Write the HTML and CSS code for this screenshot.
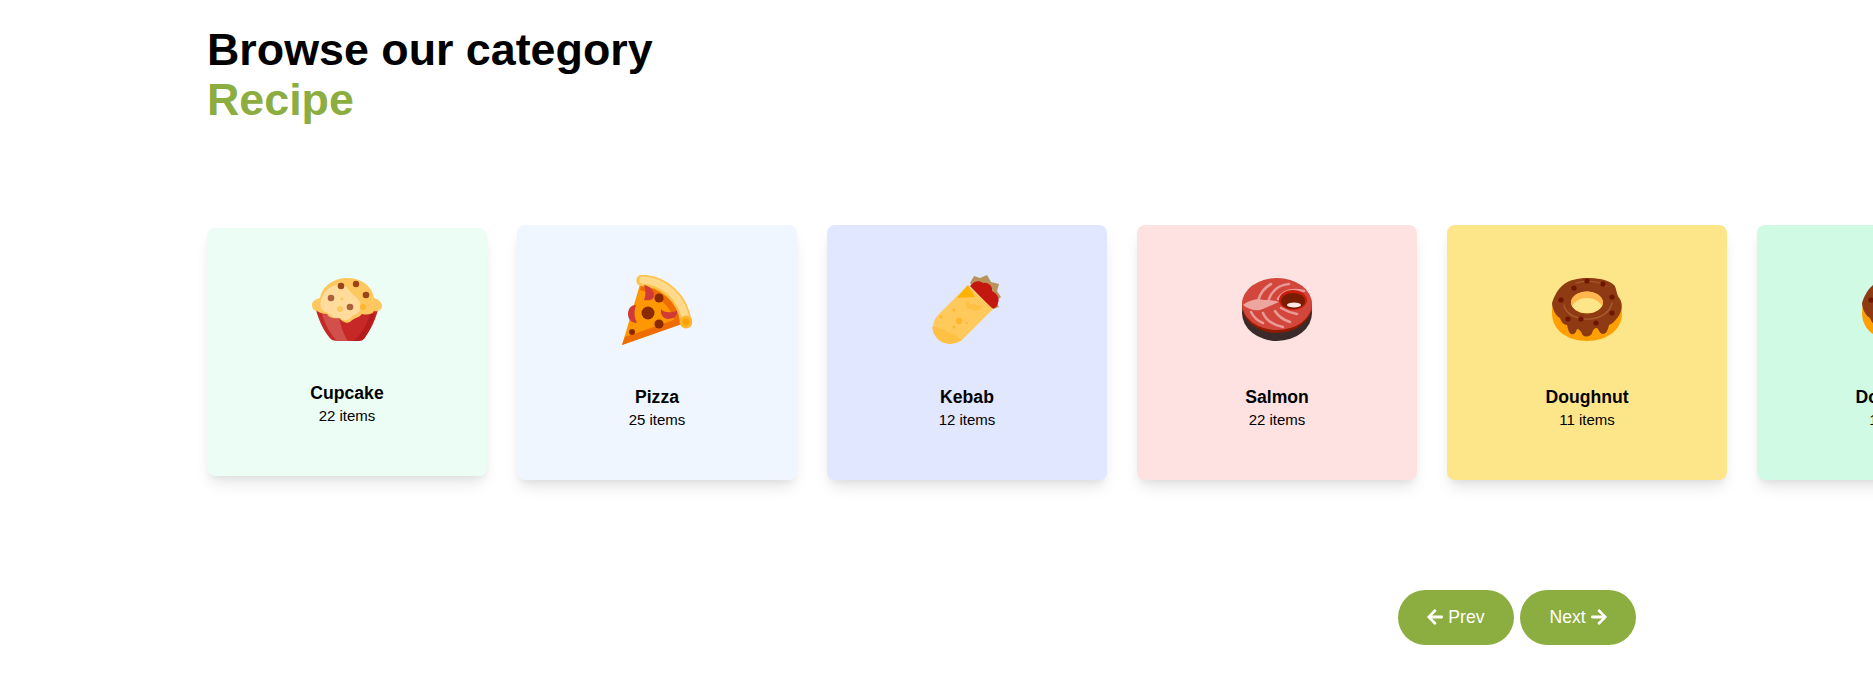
FILE: index.html
```html
<!DOCTYPE html>
<html lang="en">
<head>
  <meta charset="UTF-8">
  <meta name="viewport" content="width=device-width, initial-scale=1.0">
  <title>Browse our category</title>
  <link rel="stylesheet" href="styles.css">
</head>
<body>
  <section class="category">
    <h2 class="title">Browse our category<span class="title-accent">Recipe</span></h2>

    <div class="card-row">
      <!-- Cupcake -->
      <div class="card card-mint">
        <svg class="card-icon card-icon-short" viewBox="0 0 70 63">
          <path d="M4 32H66C63 43 58 53 53 59C51 62 48 63 44 63H26C22 63 19 62 17 59C12 53 7 43 4 32Z" fill="#c62828"/>
          <path d="M10 36C13 46 18 56 25 63H36C31 56 28 46 27 38Z" fill="#d2504c"/>
          <path d="M58 36C55 46 50 56 41 63H46C50 63 52 62 54 58C58 52 61 44 63 36Z" fill="#b71c1c"/>
          <path d="M8 20C10 8 22 0 35 0C50 0 60 8 62 20C66 21 70 24 70 28C70 32 66 34 62 33C60 37 54 37 50 36C47 40 41 40 38 44C33 46 30 43 27 40C23 41 17 40 15 36C10 36 7 34 5 33C2 33 0 30 0 27C0 23 4 21 8 20Z" fill="#ffc75f"/>
          <path d="M9 22C12 13 17 9 24 7C30 5 34 8 37 12C41 18 50 22 48 28C50 34 44 36 40 38C38 42 32 44 28 40C22 40 18 38 15 34C10 34 7 28 9 22Z" fill="#ffdc9c"/>
          <circle cx="29" cy="8" r="3.3" fill="#9a4418"/>
          <circle cx="44" cy="6" r="3.2" fill="#9a4418"/>
          <circle cx="54" cy="17" r="3.3" fill="#9a4418"/>
          <circle cx="19" cy="20" r="3.3" fill="#a9623c"/>
          <circle cx="38" cy="29" r="3.3" fill="#a9623c"/>
          <circle cx="28" cy="31" r="3" fill="#ffc75f"/>
          <circle cx="51" cy="29" r="3" fill="#ffb52e"/>
          <circle cx="30" cy="21" r="1.6" fill="#ffc75f"/>
        </svg>
        <h3 class="card-name">Cupcake</h3>
        <p class="card-count">22 items</p>
      </div>

      <!-- Pizza -->
      <div class="card card-blue">
        <svg class="card-icon" viewBox="0 0 70 70">
          <path d="M0 70L19 6C42 8 58 24 62 48Z" fill="#ff9800"/>
          <path d="M0 70L60 49C57 30 42 15 19 10L18 15C35 20 49 31 52 45L3 62Z" fill="#ef6c00"/>
          <path d="M20 5.5C43 6 61 24 64 47" fill="none" stroke="#ffc24d" stroke-width="11.5" stroke-linecap="round"/>
          <path d="M21 5C43 6 60 24 63.5 43" fill="none" stroke="#ffd98c" stroke-width="7.5" stroke-linecap="round"/>
          <circle cx="64" cy="47" r="6.5" fill="#ffb52e"/>
          <circle cx="64" cy="47" r="3.4" fill="#ffa000"/>
          <circle cx="26" cy="38" r="6.5" fill="#8a2a00"/>
          <circle cx="37" cy="23" r="4.6" fill="#8a2a00"/>
          <circle cx="37" cy="49" r="4.6" fill="#8a2a00"/>
          <circle cx="10" cy="57" r="3" fill="#8a2a00"/>
          <path d="M22 10C28 11 32 16 32 20C32 25 27 26 22 25C24 20 24 15 22 10Z" fill="#d13a37"/>
          <path d="M14 30C8 30 6 35 6 39C6 44 9 48 15 48C12 42 12 36 14 30Z" fill="#d13a37"/>
          <path d="M39 34C42 38 48 38 55 36C56 41 51 44 46 44C42 44 38 40 39 34Z" fill="#d13a37"/>
        </svg>
        <h3 class="card-name">Pizza</h3>
        <p class="card-count">25 items</p>
      </div>

      <!-- Kebab -->
      <div class="card card-indigo">
        <svg class="card-icon" viewBox="0 0 70 70">
          <path d="M38 8L42 1L48 3L55 0L59 7L67 9L65 16L69 22L64 26L67 32L61 34Z" fill="#b8935a"/>
          <path d="M38 11C42 6 47 5 51 8C55 7 61 10 60 16C65 18 68 24 66 28C65 33 61 35 58 32Z" fill="#c4170f"/>
          <path d="M36 10L61 34L33 62C26 70 12 71 5 63C-1 57 0 46 6 40Z" fill="#ffc95c"/>
          <path d="M36 10L43 22L25 23Z" fill="#ffb300"/>
          <path d="M0 52C5 51 8 55 13 54C14 59 20 58 24 60C25 63 28 63 30 65C23 70 12 71 5 63C2 60 1 56 0 52Z" fill="#ffc043"/>
          <circle cx="27" cy="46" r="3.2" fill="#ffb52e"/>
          <circle cx="22" cy="35" r="1.6" fill="#ffb52e"/>
          <circle cx="22" cy="52" r="1.6" fill="#ffb52e"/>
          <circle cx="9" cy="42" r="1.4" fill="#ffb52e"/>
          <circle cx="35" cy="48" r="1" fill="#ffb52e"/>
          <circle cx="44" cy="32" r="1.4" fill="#ffb52e"/>
          <path d="M34 26C36 25 38 31 41 29C43 28 46 32 51 31L47 35C44 38 40 34 37 34C34 33 33 29 34 26Z" fill="#ffc043"/>
        </svg>
        <h3 class="card-name">Kebab</h3>
        <p class="card-count">12 items</p>
      </div>

      <!-- Salmon -->
      <div class="card card-red">
        <svg class="card-icon" viewBox="0 0 70 70">
          <ellipse cx="35" cy="38" rx="35" ry="28" fill="#3b2a2a"/>
          <ellipse cx="35" cy="31" rx="35" ry="27" fill="#8e1a00"/>
          <ellipse cx="35" cy="29" rx="35" ry="26" fill="#d2463c"/>
          <g fill="none" stroke="#e89a96" stroke-width="2.6" stroke-linecap="round">
            <path d="M16 26C18 18 22 13 29 9"/>
            <path d="M27 24C30 16 36 10 47 9"/>
            <path d="M36 24C40 17 48 13 62 16"/>
            <path d="M9 37C12 43 16 46 21 48"/>
            <path d="M21 38C24 45 31 50 41 52"/>
            <path d="M33 36C36 41 42 45 48 47"/>
            <path d="M39 33C44 36 50 38 55 39"/>
          </g>
          <path d="M1 30C6 26 14 23 22 25C27 25 32 25 37 27C30 30 24 33 18 35C12 36 6 34 1 30Z" fill="#eda5a0"/>
          <ellipse cx="51" cy="25" rx="14" ry="10" fill="#c81e0a"/>
          <ellipse cx="51" cy="26" rx="12" ry="8" fill="#7a1c00"/>
          <ellipse cx="52" cy="30" rx="7" ry="2.4" fill="#ffe9e6"/>
        </svg>
        <h3 class="card-name">Salmon</h3>
        <p class="card-count">22 items</p>
      </div>

      <!-- Doughnut -->
      <div class="card card-amber">
        <svg class="card-icon" viewBox="0 0 70 70">
          <g id="doughnut">
            <path fill-rule="evenodd" d="M35 8C55 8 70 21 70 38C70 55 55 66 35 66C15 66 0 55 0 38C0 21 15 8 35 8ZM35 16.5C26 16.5 19 21.5 19 27.5C19 33.5 26 38.5 35 38.5C44 38.5 51 33.5 51 27.5C51 21.5 44 16.5 35 16.5Z" fill="#ffa000"/>
            <path fill-rule="evenodd" d="M35 3C44 3 56 4 62 10C65 13 64 20 68 24C71 30 70 36 66 42C63 46 60 49 57 50C56 55 54 59 51 59C48 59 47 55 45 53C42 53 41 55 40 58C39 62 32 63 30 59C29 56 27 54 25 54C24 58 22 60 19 59C17 58 16 54 15 50C11 50 9 46 8 43C4 41 0 34 0 28C2 22 5 15 11 10C17 5 26 3 35 3ZM35 16.5C26 16.5 19 21.5 19 27.5C19 33.5 26 38.5 35 38.5C44 38.5 51 33.5 51 27.5C51 21.5 44 16.5 35 16.5Z" fill="#8e3a12"/>
            <path d="M35 16.5C26 16.5 19 21.5 19 27.5C19 29 19.5 30 20 31C23 26 28 23 35 23C42 23 47 26 50 31C50.5 30 51 29 51 27.5C51 21.5 44 16.5 35 16.5Z" fill="#ffb74d"/>
            <path d="M12 30C14 40 26 45 38 44C48 43 58 38 60 28" fill="none" stroke="#a85a30" stroke-width="1.4" stroke-linecap="round"/>
            <path d="M24 8C32 5 46 6 54 11" fill="none" stroke="#a85a30" stroke-width="1.2" stroke-linecap="round"/>
            <g fill="#6e1500">
              <circle cx="35" cy="6" r="2.6"/>
              <circle cx="22" cy="13" r="2.6"/>
              <circle cx="51" cy="9" r="2.6"/>
              <circle cx="9" cy="25" r="2.6"/>
              <circle cx="60" cy="22" r="2.6"/>
              <circle cx="60" cy="38" r="2.6"/>
              <circle cx="16" cy="44" r="2.6"/>
              <circle cx="29" cy="44" r="2.6"/>
              <circle cx="44" cy="48" r="2.6"/>
            </g>
          </g>
        </svg>
        <h3 class="card-name">Doughnut</h3>
        <p class="card-count">11 items</p>
      </div>

      <!-- Doughnut, cut off by the window -->
      <div class="card card-green">
        <svg class="card-icon" viewBox="0 0 70 70"><use href="#doughnut"/></svg>
        <h3 class="card-name">Doughnut</h3>
        <p class="card-count">11 items</p>
      </div>
    </div>

    <div class="nav-buttons">
      <button class="nav-btn">
        <svg class="nav-arrow" viewBox="0 0 448 512"><path d="M257.5 445.1l-22.2 22.2c-9.4 9.4-24.6 9.4-33.9 0L7 273c-9.4-9.4-9.4-24.6 0-33.9L201.4 44.7c9.4-9.4 24.6-9.4 33.9 0l22.2 22.2c9.5 9.5 9.3 25-.4 34.3L136.6 216H424c13.3 0 24 10.7 24 24v32c0 13.3-10.7 24-24 24H136.6l120.5 114.8c9.8 9.3 10 24.8.4 34.3z"/></svg>
        Prev
      </button>
      <button class="nav-btn">
        Next
        <svg class="nav-arrow" viewBox="0 0 448 512"><path d="M190.5 66.9l22.2-22.2c9.4-9.4 24.6-9.4 33.9 0L441 239c9.4 9.4 9.4 24.6 0 33.9L246.6 467.3c-9.4 9.4-24.6 9.4-33.9 0l-22.2-22.2c-9.5-9.5-9.3-25 .4-34.3L311.4 296H24c-13.3 0-24-10.7-24-24v-32c0-13.3 10.7-24 24-24h287.4L190.9 101.2c-9.8-9.3-10-24.8-.4-34.3z"/></svg>
      </button>
    </div>
  </section>
</body>
</html>
```

FILE: styles.css
```css
body {
  margin: 0;
  padding: 0;
  overflow: hidden;
  background-color: #fff;
  color: #000;
  font-family: "Liberation Sans", Arial, sans-serif;
}

.category {
  padding: 24px 237px 0 207px;
}

.title {
  margin: 0;
  font-size: 44.8px;
  line-height: 50px;
  font-weight: bold;
}

.title-accent {
  display: block;
  color: #8cad3f;
}

/* Cards run past the right edge of the window */
.card-row {
  display: flex;
  align-items: flex-start;
  gap: 30px;
  margin-top: 101px;
  width: 1740px;
  height: 255px;
}

.card {
  flex: 0 0 280px;
  box-sizing: border-box;
  padding: 50px 0;
  text-align: center;
  border-radius: 8px;
  box-shadow: 0 10px 15px -3px rgba(0, 0, 0, 0.1), 0 4px 6px -2px rgba(0, 0, 0, 0.05);
}

.card-mint {
  margin-top: 3px;
  background-color: #ecfdf5;
}

.card-blue { background-color: #eff6ff; }
.card-indigo { background-color: #e0e7ff; }
.card-red { background-color: #fee2e2; }
.card-amber { background-color: #fde68a; }
.card-green { background-color: #d1fae5; }

.card-icon {
  display: block;
  width: 70px;
  height: 70px;
  margin: 0 auto 40px;
}

.card-icon-short {
  height: 63px;
}

.card-name {
  margin: 0 0 1px;
  font-size: 17.6px;
  line-height: 24px;
  font-weight: bold;
}

.card-count {
  margin: 0;
  font-size: 15px;
  line-height: 20px;
}

.nav-buttons {
  display: flex;
  justify-content: flex-end;
  gap: 6px;
  margin-top: 110px;
}

.nav-btn {
  width: 116px;
  height: 55px;
  padding: 0;
  border: 0;
  border-radius: 50px;
  background-color: #8cad3f;
  color: #fff;
  font-family: inherit;
  font-size: 17.6px;
}

.nav-arrow {
  width: 16px;
  height: 18px;
  fill: #fff;
  vertical-align: -3px;
}
```
